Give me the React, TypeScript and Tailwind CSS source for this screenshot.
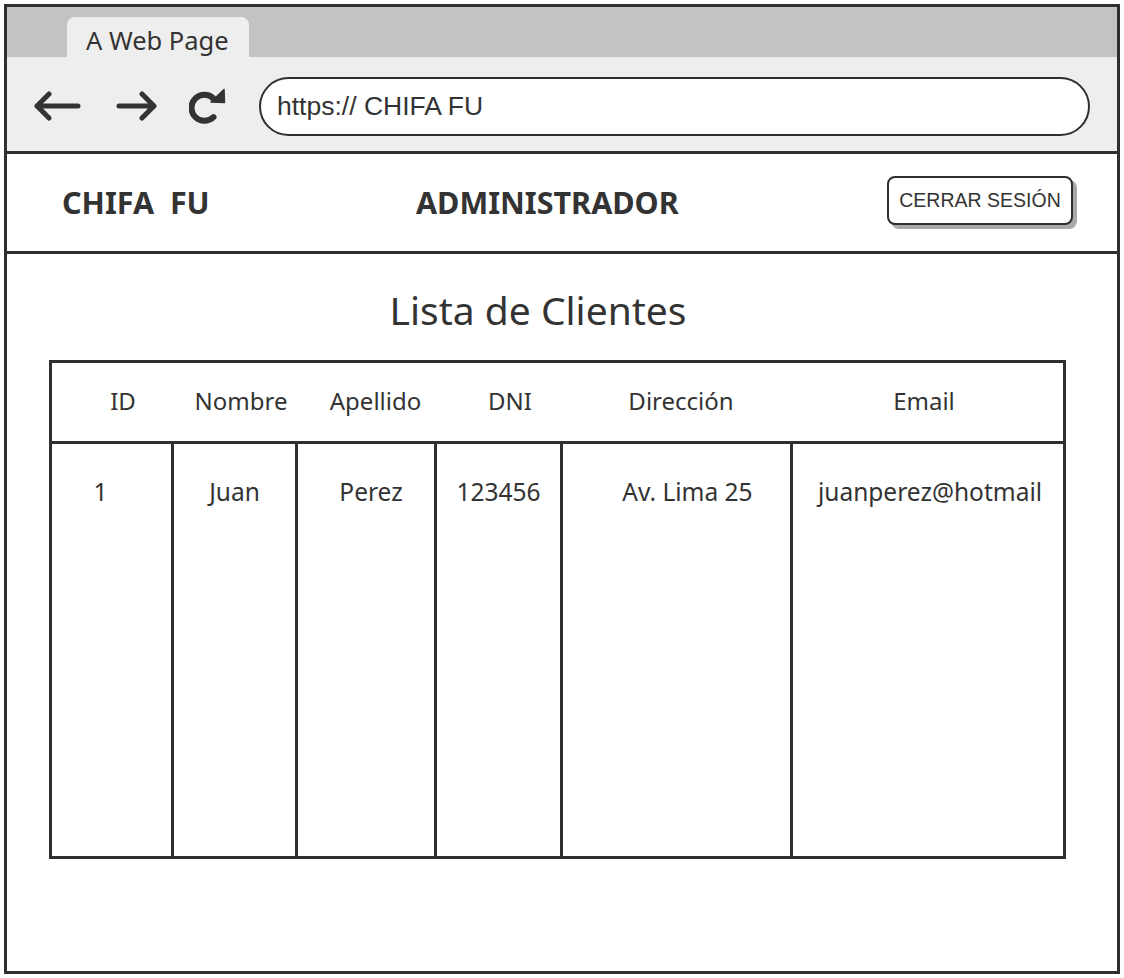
const sketch = "font-['Noto_Sans',sans-serif] text-[#333333]";
const arial = "font-['Liberation_Sans',Arial,sans-serif] text-[#333333]";

const BackArrow = () => (
    <svg width="48" height="30" viewBox="0 0 48 30" fill="none" stroke="#333" strokeWidth="5" strokeLinecap="round" strokeLinejoin="round">
        <path d="M45 15H4M16 3L4 15l12 12" />
    </svg>
);

const ForwardArrow = () => (
    <svg width="42" height="30" viewBox="0 0 42 30" fill="none" stroke="#333" strokeWidth="5" strokeLinecap="round" strokeLinejoin="round">
        <path d="M3 15h35M26 3l12 12-12 12" />
    </svg>
);

const Reload = () => (
    <svg width="38" height="36" viewBox="0 0 38 36" fill="none">
        <path d="M24.5 10.5A13 13 0 1 0 24.5 29.2" stroke="#333" strokeWidth="6" strokeLinecap="round" />
        <path d="M22 14L35 1.5 35.5 14.5z" fill="#333" stroke="#333" strokeWidth="1.5" strokeLinejoin="round" />
    </svg>
);

const cols = [
    { w: "w-[122px]", head: "ID", headPad: "pl-[20px]", cell: "1", cellPad: "pr-[22px]" },
    { w: "w-[124px]", head: "Nombre", headPad: "pl-[10px]", cell: "Juan", cellPad: "" },
    { w: "w-[139px]", head: "Apellido", headPad: "pl-[16px]", cell: "Perez", cellPad: "pl-[10px]" },
    { w: "w-[126px]", head: "DNI", headPad: "pl-[20px]", cell: "123456", cellPad: "" },
    { w: "w-[230px]", head: "Dirección", headPad: "pl-[6px]", cell: "Av. Lima 25", cellPad: "pl-[22px]" },
    { w: "flex-1", head: "Email", headPad: "pr-[8px]", cell: "juanperez@hotmail", cellPad: "pl-[4px]" },
];

export default function App() {
    return (
        <div className="w-[1124px] h-[978px] bg-white p-[4px]">
            <div className="h-full border-[3px] border-[#2f2f2f] flex flex-col">

                {/* browser tab band */}
                <div className="h-[50px] bg-[#c3c3c3] flex items-end pl-[60px]">
                    <div className={`w-[182px] h-[40px] bg-[#eeeeee] rounded-t-[8px] pl-[19px] pt-[11px] text-[25.5px] leading-none ${sketch}`}>
                        A Web Page
                    </div>
                </div>

                {/* toolbar */}
                <div className="h-[97px] bg-[#eeeeee] border-b-[3px] border-[#2f2f2f] flex items-center pl-[26px] pr-[27px] pt-[4px]">
                    <BackArrow />
                    <div className="ml-[35px]"><ForwardArrow /></div>
                    <div className="ml-[31px]"><Reload /></div>
                    <div className="ml-[32px] flex-1 h-[59px] bg-white border-[2.5px] border-[#2f2f2f] rounded-full flex items-center pl-[16px]">
                        <span className={`text-[26.5px] leading-none ${arial}`}>https:// CHIFA FU</span>
                    </div>
                </div>

                {/* app header */}
                <div className="h-[100px] border-b-[3px] border-[#2f2f2f] flex items-center pl-[55px] pr-[44px]">
                    <div className={`w-[300px] text-[30.5px] font-bold leading-none whitespace-pre ${sketch}`}>CHIFA  FU</div>
                    <div className={`ml-[54px] text-[30.5px] font-bold leading-none ${sketch}`}>ADMINISTRADOR</div>
                    <button className={`ml-auto mb-[4px] w-[186px] h-[49px] bg-white border-2 border-[#2f2f2f] rounded-[8px] shadow-[4px_4px_0_#a8a8a8] text-[19.5px] leading-none ${arial}`}>
                        CERRAR SESIÓN
                    </button>
                </div>

                {/* content */}
                <div className="flex-1 flex flex-col pt-[36px]">
                    <h1 className={`text-center pr-[48px] text-[39px] leading-none ${sketch}`}>Lista de Clientes</h1>

                    <div className="mt-[31px] ml-[42px] mr-[51px] border-[3px] border-[#2f2f2f] flex flex-col">
                        <div className="h-[81px] border-b-[3px] border-[#2f2f2f] flex pb-[2px]">
                            {cols.map(c => (
                                <div key={c.head} className={`${c.w} ${c.headPad} flex items-center justify-center text-[24px] leading-none ${sketch}`}>
                                    {c.head}
                                </div>
                            ))}
                        </div>
                        <div className="h-[412px] flex">
                            {cols.map((c, i) => (
                                <div key={c.head}
                                     className={`${c.w} ${c.cellPad} ${i < cols.length - 1 ? "border-r-[3px] border-[#2f2f2f]" : ""} pt-[36px] text-center text-[24.5px] leading-none ${sketch}`}>
                                    {c.cell}
                                </div>
                            ))}
                        </div>
                    </div>
                </div>
            </div>
        </div>
    );
}
